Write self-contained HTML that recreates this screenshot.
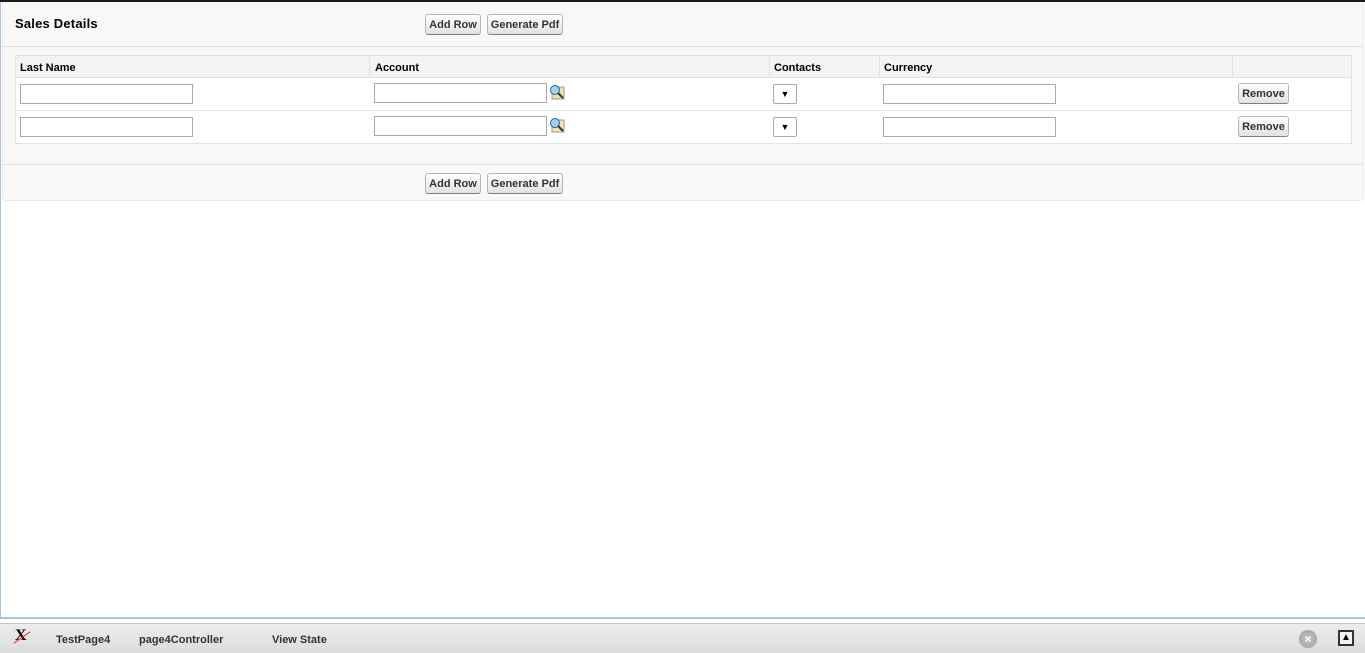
<!DOCTYPE html>
<html><head><style>
*{margin:0;padding:0;box-sizing:border-box}
body{width:1365px;height:653px;overflow:hidden;background:#fff;font-family:"Liberation Sans",Arial,sans-serif;font-size:11px;color:#000;position:relative}
.a{position:absolute}
.btn{position:absolute;height:21px;border:1px solid #b5b5b5;border-bottom-color:#7f7f7f;border-radius:3px;background:linear-gradient(#fff,#f0f0f0 50%,#e2e2e2);font-weight:bold;font-size:11px;color:#333;text-align:center;line-height:21px}
.inp{position:absolute;height:20px;border:1px solid #a9a9a9;background:#fff}
.th{position:absolute;top:62px;font-weight:bold;font-size:11px}
.sel{position:absolute;width:24px;height:20px;border:1px solid #a9a9a9;border-radius:2px;background:#fff;font-size:9px;text-align:center;line-height:18px}
.lk{position:absolute;width:16px;height:16px}
</style></head><body>
<div class="a" style="left:0;top:0;width:1365px;height:2px;background:#1a1a1a"></div>
<div class="a" style="left:0;top:2px;width:1px;height:616px;background:#a8c3e0"></div>
<div class="a" style="left:2px;top:2px;width:1362px;height:199px;background:#f8f8f8;border:1px solid #eaeaea;border-top:none;border-radius:0 0 4px 4px"></div>
<div class="a" style="left:15px;top:16px;font-size:13px;font-weight:bold;letter-spacing:0.2px">Sales Details</div>
<div class="btn" style="left:425px;top:14px;width:56px">Add Row</div>
<div class="btn" style="left:487px;top:14px;width:76px">Generate Pdf</div>
<div class="a" style="left:2px;top:46px;width:1362px;height:1px;background:#e0e0e0"></div>
<div class="a" style="left:15px;top:55px;width:1337px;height:89px;background:#fff;border:1px solid #e0e3e5"></div>
<div class="a" style="left:16px;top:56px;width:1335px;height:22px;background:#f2f3f3;border-bottom:1px solid #e0e3e5"></div>
<div class="a" style="left:16px;top:110px;width:1335px;height:1px;background:#e3e3e3"></div>
<div class="a" style="left:369px;top:56px;width:1px;height:21px;background:#e0e3e5"></div>
<div class="a" style="left:769px;top:56px;width:1px;height:21px;background:#e0e3e5"></div>
<div class="a" style="left:879px;top:56px;width:1px;height:21px;background:#e0e3e5"></div>
<div class="a" style="left:1232px;top:56px;width:1px;height:21px;background:#e0e3e5"></div>
<div class="th" style="left:20px">Last Name</div>
<div class="th" style="left:375px">Account</div>
<div class="th" style="left:774px">Contacts</div>
<div class="th" style="left:884px">Currency</div>

<div class="inp" style="left:20px;top:84px;width:173px"></div>
<div class="inp" style="left:374px;top:83px;width:173px"></div>
<svg class="lk" style="left:549px;top:84px" viewBox="0 0 16 16"><rect x="3" y="3" width="12" height="12" fill="#f3e2a0" stroke="#999"/><circle cx="6" cy="6" r="4.5" fill="#9fd0f0" stroke="#2f5f8f"/><line x1="9" y1="9" x2="14" y2="14" stroke="#333" stroke-width="2"/></svg>
<div class="sel" style="left:773px;top:84px">▼</div>
<div class="inp" style="left:883px;top:84px;width:173px"></div>
<div class="btn" style="left:1238px;top:83px;width:51px">Remove</div>

<div class="inp" style="left:20px;top:117px;width:173px"></div>
<div class="inp" style="left:374px;top:116px;width:173px"></div>
<svg class="lk" style="left:549px;top:117px" viewBox="0 0 16 16"><rect x="3" y="3" width="12" height="12" fill="#f3e2a0" stroke="#999"/><circle cx="6" cy="6" r="4.5" fill="#9fd0f0" stroke="#2f5f8f"/><line x1="9" y1="9" x2="14" y2="14" stroke="#333" stroke-width="2"/></svg>
<div class="sel" style="left:773px;top:117px">▼</div>
<div class="inp" style="left:883px;top:117px;width:173px"></div>
<div class="btn" style="left:1238px;top:116px;width:51px">Remove</div>

<div class="a" style="left:2px;top:164px;width:1362px;height:1px;background:#e0e0e0"></div>
<div class="btn" style="left:425px;top:173px;width:56px">Add Row</div>
<div class="btn" style="left:487px;top:173px;width:76px">Generate Pdf</div>

<div class="a" style="left:0;top:617px;width:1365px;height:2px;background:#a8c3e0"></div>
<div class="a" style="left:0;top:619px;width:1365px;height:4px;background:#fff"></div>
<div class="a" style="left:0;top:623px;width:1365px;height:30px;background:linear-gradient(#ececec,#dcdcdc);border-top:1px solid #c8c8c8"></div>
<div class="a" style="left:15px;top:627px;font-family:'Liberation Serif',serif;font-size:16px;font-weight:bold">X</div>
<div class="a" style="left:12px;top:637px;width:20px;height:1px;background:#e22;transform:rotate(-35deg)"></div>
<div class="a" style="left:56px;top:634px;font-size:11px;font-weight:bold;color:#333">TestPage4</div>
<div class="a" style="left:139px;top:634px;font-size:11px;font-weight:bold;color:#333">page4Controller</div>
<div class="a" style="left:272px;top:634px;font-size:11px;font-weight:bold;color:#333">View State</div>
<div class="a" style="left:1299px;top:630px;width:18px;height:18px;border-radius:50%;background:radial-gradient(#c8c8c8,#9a9a9a);color:#fff;font-size:12px;font-weight:bold;text-align:center;line-height:18px">×</div>
<div class="a" style="left:1338px;top:630px;width:16px;height:16px;border:2px solid #333;background:#f4f4f4;font-size:10px;text-align:center;line-height:11px">▲</div>
</body></html>
